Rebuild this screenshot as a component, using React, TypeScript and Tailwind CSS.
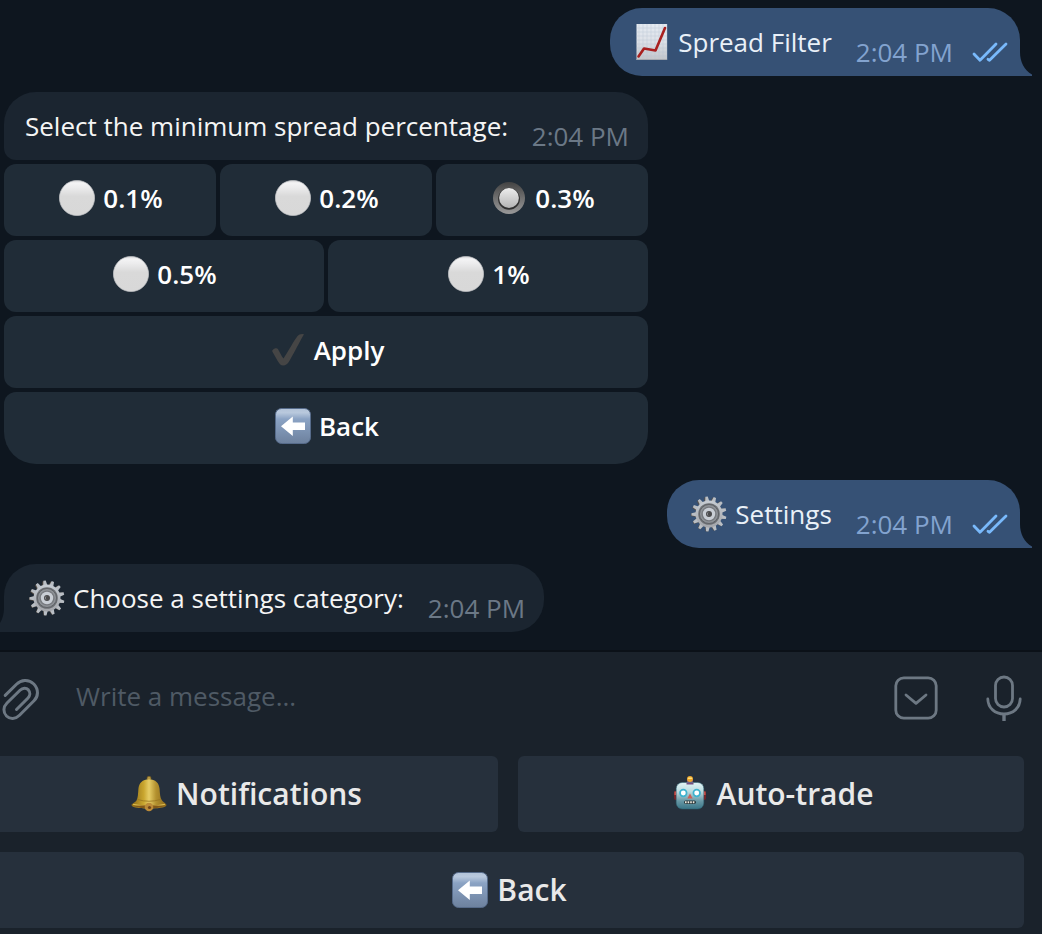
import React, { useId, useState } from 'react';

type IconProps = { className?: string };

function ChartIcon() {
  const id = useId();
  const lines = [4, 8, 12, 16, 20, 24, 28, 32];
  return (
    <svg viewBox="0 0 36 36" className="size-9 shrink-0" aria-hidden="true">
      <defs>
        <linearGradient id={id} x1="0" y1="0" x2="0" y2="1">
          <stop offset="0" stopColor="#e4eaf1" />
          <stop offset="0.5" stopColor="#dde1e7" />
          <stop offset="1" stopColor="#c3c5c9" />
        </linearGradient>
      </defs>
      <rect x="2.5" y="0" width="30.5" height="36" fill={`url(#${id})`} />
      <g stroke="#b4c3d3" strokeWidth="0.5" opacity="0.75">
        {lines.map((n) => (
          <path key={n} d={`M2.5 ${n}H33M${n + 1} 0V36`} />
        ))}
      </g>
      <path d="M2.5 35.5H33" stroke="#a5a9b0" strokeWidth="1" />
      <path
        d="M4.5 32.5 10 24.5 21.5 26.5 31 4"
        fill="none"
        stroke="#a9201f"
        strokeWidth="2.6"
        strokeLinejoin="round"
        strokeLinecap="round"
      />
    </svg>
  );
}

function GearIcon() {
  const id = useId();
  const teeth = Array.from({ length: 13 }, (_, i) => (i * 360) / 13 - 8);
  return (
    <svg viewBox="0 0 36 36" className="size-9 shrink-0" aria-hidden="true">
      <defs>
        <linearGradient id={id} x1="0" y1="0" x2="0" y2="1">
          <stop offset="0" stopColor="#c6ccd3" />
          <stop offset="1" stopColor="#a3a5aa" />
        </linearGradient>
      </defs>
      <g fill="#5a5148">
        {teeth.map((a) => (
          <path key={a} d="M15.6 6 16.5 .8H19L20 6Z" transform={`translate(-.7 .3) rotate(${a} 18 18)`} />
        ))}
      </g>
      <g fill="#b9bec4">
        {teeth.map((a) => (
          <path key={a} d="M15.8 6 16.8 .5H19.2L20.2 6Z" transform={`rotate(${a} 18 18)`} />
        ))}
      </g>
      <circle cx="18" cy="18" r="13.5" fill={`url(#${id})`} />
      <circle cx="18" cy="18" r="10.8" fill="#6e7175" />
      <circle cx="18" cy="18" r="9.5" fill="#8e9297" stroke="#585b5f" strokeWidth="0.8" />
      <circle cx="18" cy="18" r="7.6" fill="#777a7f" />
      <circle cx="18" cy="18" r="6.2" fill="#c9ced5" />
      <circle cx="18" cy="18" r="3" fill="#4a4a4c" />
      <path d="M17 16.5a2 2 0 0 0 0 3" fill="none" stroke="#8a8d91" strokeWidth="1" />
    </svg>
  );
}

function CircleIcon() {
  const id = useId();
  return (
    <svg viewBox="0 0 36 36" className="size-9 shrink-0" aria-hidden="true">
      <defs>
        <linearGradient id={id} x1="0" y1="0" x2="0" y2="1">
          <stop offset="0" stopColor="#d0d0d2" />
          <stop offset="0.07" stopColor="#f4f4f5" />
          <stop offset="0.2" stopColor="#ececed" />
          <stop offset="0.45" stopColor="#d9d9d9" />
          <stop offset="1" stopColor="#d8d8d8" />
        </linearGradient>
      </defs>
      <circle cx="18" cy="18" r="17.6" fill={`url(#${id})`} stroke="#c4c5c8" strokeWidth="0.7" />
    </svg>
  );
}

function RadioIcon() {
  const id = useId();
  return (
    <svg viewBox="0 0 36 36" className="size-9 shrink-0" aria-hidden="true">
      <defs>
        <linearGradient id={`${id}r`} x1="0" y1="0" x2="0" y2="1">
          <stop offset="0" stopColor="#434343" />
          <stop offset="0.5" stopColor="#707070" />
          <stop offset="1" stopColor="#999999" />
        </linearGradient>
        <linearGradient id={`${id}c`} x1="0" y1="0" x2="0" y2="1">
          <stop offset="0" stopColor="#ededed" />
          <stop offset="1" stopColor="#b5b5b5" />
        </linearGradient>
      </defs>
      <circle cx="18" cy="18" r="16" fill={`url(#${id}r)`} />
      <circle cx="18" cy="18.9" r="10.9" fill="#303030" />
      <circle cx="18" cy="18" r="9.9" fill={`url(#${id}c)`} />
    </svg>
  );
}

function CheckIcon() {
  return (
    <svg viewBox="0 0 36 36" className="size-9 shrink-0" aria-hidden="true">
      <path
        d="M2.2 19.3C2 17.3 6.5 15.2 7.9 17C9.4 19.3 11.5 24.5 13.5 26.5C18.5 19 24 8.5 27.6 4Q29.5 1.5 34 2.2C30.5 8 24 21 19.8 28.2Q17 33.5 13 33.5Q10.7 33.5 9.2 31.3C6.8 28 4.7 23.5 2.2 19.3Z"
        fill="#454545"
      />
    </svg>
  );
}

function BackIcon() {
  const id = useId();
  return (
    <svg viewBox="0 0 36 36" className="size-9 shrink-0" aria-hidden="true">
      <defs>
        <linearGradient id={id} x1="0" y1="0" x2="0" y2="1">
          <stop offset="0" stopColor="#b2c3d8" />
          <stop offset="0.12" stopColor="#b9c9dd" />
          <stop offset="0.3" stopColor="#8ba3c4" />
          <stop offset="1" stopColor="#6d819e" />
        </linearGradient>
      </defs>
      <rect x="0.5" y="0.5" width="35" height="35" rx="6" fill={`url(#${id})`} stroke="#566b8a" />
      <path d="M6 18.3 17.8 8.5V14.5H30V22.1H17.8V28Z" fill="#fff" />
    </svg>
  );
}

function BellIcon() {
  const id = useId();
  return (
    <svg viewBox="0 0 36 36" className="size-9 shrink-0" aria-hidden="true">
      <defs>
        <linearGradient id={id} x1="0" y1="0" x2="1" y2="0">
          <stop offset="0" stopColor="#8d6a16" />
          <stop offset="0.35" stopColor="#c9a62f" />
          <stop offset="0.5" stopColor="#e6cd66" />
          <stop offset="0.7" stopColor="#b3912f" />
          <stop offset="1" stopColor="#8b671a" />
        </linearGradient>
      </defs>
      <circle cx="18" cy="2.2" r="2" fill="#b59744" stroke="#775b1b" strokeWidth="0.6" />
      <path
        d="M18 3.2C24.5 3.2 28.2 7 28.6 13C29 18 29 21.5 31 24.5C32.8 26.5 35.8 28 35.5 29.3C34.5 32 26 32.5 18 32.5S1.5 32 .5 29.3C.2 28 4 26.5 5.500 24.5C7 22 7 18 7.4 13C7.800 7 11.500 3.2 18 3.2Z"
        fill={`url(#${id})`}
      />
      <path d="M6.5 23.5Q18 27 29.5 23.5" fill="none" stroke="#97741f" strokeWidth="0.8" />
      <path d="M2 28.3Q18 32 34 28.300" fill="none" stroke="#dfbf52" strokeWidth="1" />
      <path d="M2 30Q18 28.5 34 30Q26 32.5 18 32.5T2 30Z" fill="#835918" />
      <circle cx="18" cy="31" r="4.3" fill="#bc8b38" />
      <circle cx="18.5" cy="31.5" r="1.6" fill="#6f441b" />
    </svg>
  );
}

function RobotIcon() {
  const id = useId();
  return (
    <svg viewBox="0 0 36 36" className="size-9 shrink-0" aria-hidden="true">
      <defs>
        <linearGradient id={id} x1="0" y1="0" x2="0" y2="1">
          <stop offset="0" stopColor="#e2f4f5" />
          <stop offset="0.35" stopColor="#b9dade" />
          <stop offset="0.7" stopColor="#6797a5" />
          <stop offset="1" stopColor="#397587" />
        </linearGradient>
      </defs>
      <rect x="2" y="15" width="5" height="9" rx="2" fill="#7a2224" />
      <rect x="29" y="15" width="5" height="9" rx="2" fill="#7a2224" />
      <path d="M3.5 15.5V19M32.5 15.5V19" stroke="#d65a52" strokeWidth="2" />
      <path d="M15 4H21V8H15Z" fill="#71507f" />
      <circle cx="18" cy="3" r="3" fill="#eda52d" />
      <path d="M16.5 2.2H19.5" stroke="#ffe27b" strokeWidth="1.5" strokeLinecap="round" />
      <rect x="4.2" y="6.5" width="27.6" height="26.5" rx="6" fill={`url(#${id})`} stroke="#2c6272" strokeWidth="0.5" />
      <path d="M14.5 6.5H21.5V8.500H14.5Z" fill="#71507f" />
      <circle cx="11.3" cy="17" r="3.3" fill="#fff" stroke="#3db2cf" strokeWidth="1.7" />
      <circle cx="24.7" cy="17" r="3.3" fill="#fff" stroke="#3db2cf" strokeWidth="1.7" />
      <path d="M18 17.5 20.7 22.5H15.3Z" fill="#cb5f57" />
      <rect x="12" y="24.5" width="12" height="3.5" rx="1.7" fill="#27383e" />
      <path d="M13 26.2H23" stroke="#efe9dc" strokeWidth="2" strokeDasharray="1.6 1" />
    </svg>
  );
}

function ReadIcon() {
  return (
    <svg
      viewBox="0 0 36 22"
      className="h-[22px] w-9 shrink-0"
      fill="none"
      stroke="#79b9fb"
      strokeWidth="2.8"
      strokeLinecap="round"
      strokeLinejoin="round"
      role="img"
      aria-label="Read"
    >
      <path d="M2 13 8 19.3 24 3M16 18.3 17.5 19.3 34 3" />
    </svg>
  );
}

function ClipIcon({ className }: IconProps) {
  return (
    <svg viewBox="0 0 40 44" className={className} fill="none" stroke="currentColor" strokeWidth="3" strokeLinecap="round" aria-hidden="true">
      <path d="M5.2 17.4 16.5 6.3C21 1.8 28.5 1 33.8 6C39 11.500 38.300 18.500 34 22.8L19.5 37.3C15.5 41.3 10 41.500 6.500 38C3 34.3 3 29 7 25L20 12.300C22.8 9.6 26.300 9.700 28.4 11.900C30.500 14.2 30.3 17.6 27.8 20.2L16.500 31.500" />
    </svg>
  );
}

function KeyboardHideIcon() {
  return (
    <svg viewBox="0 0 44 44" className="size-11" fill="none" stroke="currentColor" strokeWidth="2.8" strokeLinecap="round" strokeLinejoin="round" aria-hidden="true">
      <rect x="1.8" y="1.8" width="40.4" height="40.4" rx="8" />
      <path d="M12 19 22 27.3 32 19" />
    </svg>
  );
}

function MicIcon() {
  return (
    <svg viewBox="0 0 36 46" className="h-[46px] w-9" fill="none" stroke="currentColor" strokeWidth="2.8" strokeLinecap="round" aria-hidden="true">
      <rect x="9.5" y="2" width="17" height="30" rx="8.5" />
      <path d="M1.8 24C2 33 9 39 18 39S34 33 34.2 24" />
      <path d="M18 39V46" strokeWidth="3.4" strokeLinecap="butt" />
    </svg>
  );
}

function Tail({ className }: IconProps) {
  return (
    <svg viewBox="0 0 12 24" className={className} fill="currentColor" aria-hidden="true">
      <path d="M0 0C0 10 4 18 12 22.5V24H0Z" />
    </svg>
  );
}

function OutgoingMessage({ icon, text }: { icon: React.ReactNode; text: string }) {
  return (
    <div className="relative mr-[22px] flex h-[68px] self-end rounded-[32px] rounded-br-none bg-[#365175] pr-3 pl-6 text-[#e9f0f8]">
      <div className="flex gap-2 pt-4">
        {icon}
        <span>{text}</span>
      </div>
      <div className="ml-6 flex items-center gap-[19px] self-end pb-1.5 text-[#83a3cf]">
        <time>2:04 PM</time>
        <ReadIcon />
      </div>
      <Tail className="absolute bottom-0 left-full h-6 w-3 text-[#365175]" />
    </div>
  );
}

const spreadRows = [
  ['0.1%', '0.2%', '0.3%'],
  ['0.5%', '1%'],
];

const inlineButton =
  'flex h-[72px] flex-1 justify-center gap-2 rounded-xl bg-[#202c37] pt-4 pb-5 pl-0.5 font-semibold text-white';

const keyboardButton =
  'flex h-[76px] items-center justify-center gap-[9px] rounded-md bg-[#26303c] pl-[3px] text-[30px] leading-10 font-semibold text-[#e9e9e9]';

export default function App() {
  const [spread, setSpread] = useState('0.3%');

  return (
    <div className="flex min-h-screen flex-col overflow-hidden bg-[#0e161f] font-['Open_Sans','Noto_Sans',sans-serif] text-[26px] leading-9">
      <main className="flex grow flex-col gap-4 pt-2 pb-[18px] pl-1">
        <OutgoingMessage icon={<ChartIcon />} text="Spread Filter" />

        {/* Spread selection */}
        <section className="flex w-[644px] max-w-full flex-col gap-1">
          <div className="flex h-[68px] justify-between rounded-t-[32px] rounded-b-xl bg-[#1b2530] pr-[19px] pl-[21px]">
            <p className="pt-4 text-[#f5f5f5]">Select the minimum spread percentage:</p>
            <time className="self-end pb-1.5 text-[#6b7886]">2:04 PM</time>
          </div>
          {spreadRows.map((row) => (
            <div key={row[0]} className="flex gap-1">
              {row.map((value) => (
                <button
                  key={value}
                  type="button"
                  aria-pressed={spread === value}
                  className={inlineButton}
                  onClick={() => setSpread(value)}
                >
                  {spread === value ? <RadioIcon /> : <CircleIcon />}
                  {value}
                </button>
              ))}
            </div>
          ))}
          <div className="flex">
            <button type="button" className={inlineButton}>
              <CheckIcon />
              Apply
            </button>
          </div>
          <div className="flex overflow-hidden rounded-b-[32px]">
            <button type="button" className={inlineButton}>
              <BackIcon />
              Back
            </button>
          </div>
        </section>

        <OutgoingMessage icon={<GearIcon />} text="Settings" />

        <div className="relative flex h-[68px] self-start rounded-[32px] rounded-bl-none bg-[#1b2530] pr-[19px] pl-[25px]">
          <div className="flex gap-2 pt-4 text-[#f5f5f5]">
            <GearIcon />
            <p>Choose a settings category:</p>
          </div>
          <time className="ml-6 self-end pb-1.5 text-[#6b7886]">2:04 PM</time>
          <Tail className="absolute right-full bottom-0 h-6 w-3 -scale-x-100 text-[#1b2530]" />
        </div>
      </main>

      <footer className="border-t-2 border-[#0b1118] bg-[#1a222b]">
        {/* Composer */}
        <div className="flex h-[92px] items-center pr-5 text-[#6d7883]">
          <button type="button" aria-label="Attach file" className="pt-1">
            <ClipIcon className="h-11 w-10" />
          </button>
          <input
            type="text"
            aria-label="Message"
            placeholder="Write a message..."
            className="mx-9 min-w-0 flex-1 bg-transparent pb-1 text-[#f5f5f5] outline-none placeholder:text-[#4f5a65]"
          />
          <button type="button" aria-label="Hide keyboard">
            <KeyboardHideIcon />
          </button>
          <button type="button" aria-label="Record voice message" className="ml-12">
            <MicIcon />
          </button>
        </div>

        {/* Reply keyboard, runs past the left edge */}
        <div className="-ml-2 grid grid-cols-2 gap-5 pt-3 pr-[18px] pb-1.5">
          <button type="button" className={keyboardButton}>
            <BellIcon />
            Notifications
          </button>
          <button type="button" className={keyboardButton}>
            <RobotIcon />
            Auto-trade
          </button>
          <button type="button" className={`${keyboardButton} col-span-2`}>
            <BackIcon />
            Back
          </button>
        </div>
      </footer>
    </div>
  );
}
